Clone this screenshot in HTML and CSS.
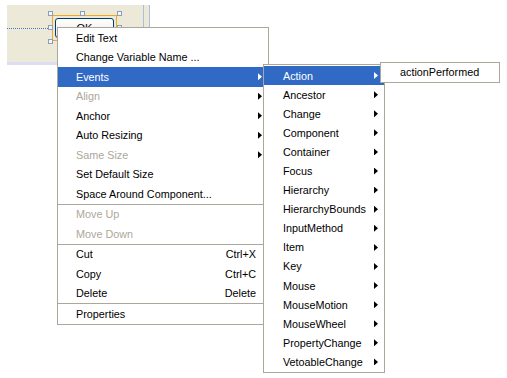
FILE: index.html
```html
<!DOCTYPE html>
<html lang="en">
<head>
  <meta charset="UTF-8">
  <title>Form Designer - Context Menu</title>
  <link rel="stylesheet" href="styles.css">
</head>
<body>
  <!-- design surface with the selected OK button -->
  <div class="canvas">
    <div class="surface">
      <div class="guide"></div>
      <div class="selection"></div>
      <div class="btn">OK</div>
      <span class="handle h-tl"></span>
      <span class="handle h-tm"></span>
      <span class="handle h-tr"></span>
      <span class="handle h-ml"></span>
      <span class="handle h-mr"></span>
      <span class="handle h-bl"></span>
      <span class="handle h-bm"></span>
      <span class="handle h-br"></span>
    </div>
    <div class="surface-foot"></div>
  </div>

  <!-- context menu -->
  <ul class="menu main-menu">
    <li class="item"><span class="label">Edit Text</span></li>
    <li class="item"><span class="label">Change Variable Name ...</span></li>
    <li class="item active"><span class="label">Events</span><span class="arrow"></span></li>
    <li class="item disabled"><span class="label">Align</span><span class="arrow"></span></li>
    <li class="item"><span class="label">Anchor</span><span class="arrow"></span></li>
    <li class="item"><span class="label">Auto Resizing</span><span class="arrow"></span></li>
    <li class="item disabled"><span class="label">Same Size</span><span class="arrow"></span></li>
    <li class="item"><span class="label">Set Default Size</span></li>
    <li class="item"><span class="label">Space Around Component...</span></li>
    <li class="sep"></li>
    <li class="item disabled"><span class="label">Move Up</span></li>
    <li class="item disabled"><span class="label">Move Down</span></li>
    <li class="sep"></li>
    <li class="item"><span class="label">Cut</span><span class="key">Ctrl+X</span></li>
    <li class="item"><span class="label">Copy</span><span class="key">Ctrl+C</span></li>
    <li class="item"><span class="label">Delete</span><span class="key">Delete</span></li>
    <li class="sep"></li>
    <li class="item"><span class="label">Properties</span></li>
  </ul>

  <!-- Events submenu -->
  <ul class="menu events-menu">
    <li class="item active"><span class="label">Action</span><span class="arrow"></span></li>
    <li class="item"><span class="label">Ancestor</span><span class="arrow"></span></li>
    <li class="item"><span class="label">Change</span><span class="arrow"></span></li>
    <li class="item"><span class="label">Component</span><span class="arrow"></span></li>
    <li class="item"><span class="label">Container</span><span class="arrow"></span></li>
    <li class="item"><span class="label">Focus</span><span class="arrow"></span></li>
    <li class="item"><span class="label">Hierarchy</span><span class="arrow"></span></li>
    <li class="item"><span class="label">HierarchyBounds</span><span class="arrow"></span></li>
    <li class="item"><span class="label">InputMethod</span><span class="arrow"></span></li>
    <li class="item"><span class="label">Item</span><span class="arrow"></span></li>
    <li class="item"><span class="label">Key</span><span class="arrow"></span></li>
    <li class="item"><span class="label">Mouse</span><span class="arrow"></span></li>
    <li class="item"><span class="label">MouseMotion</span><span class="arrow"></span></li>
    <li class="item"><span class="label">MouseWheel</span><span class="arrow"></span></li>
    <li class="item"><span class="label">PropertyChange</span><span class="arrow"></span></li>
    <li class="item"><span class="label">VetoableChange</span><span class="arrow"></span></li>
  </ul>

  <!-- Action submenu -->
  <ul class="menu action-menu">
    <li class="item"><span class="label">actionPerformed</span></li>
  </ul>
</body>
</html>
```

FILE: styles.css
```css
body {
  margin: 0;
  width: 507px;
  height: 378px;
  background: #fff;
  font-family: 'Liberation Sans', Arial, sans-serif;
  font-size: 10.8px;
  color: #000;
  position: relative;
  overflow: hidden;
}

/* design surface */
.canvas {
  padding: 5px 0 0 7px;
}
.surface {
  position: relative;
  width: 143px;
  height: 57px;
  background: linear-gradient(to right, #ece9d8 136px, #a9bfe2 136px 137px, #ece9d8 137px 142px, #a9bfe2 142px);
}
.surface-foot {
  width: 136px;
  height: 3px;
  background: #dcdcf4;
}
.guide {
  position: absolute;
  left: 0; top: 23px;
  width: 41px;
  border-top: 1px dotted #4a78c8;
}
.selection {
  position: absolute;
  left: 45px; top: 10px;
  width: 65px; height: 26px;
  box-sizing: border-box;
  border: 1px solid #f5a623;
}
.btn {
  position: absolute;
  left: 48px; top: 13px;
  width: 59px; height: 20px;
  box-sizing: border-box;
  border: 1px solid #003c74;
  border-radius: 3px;
  background: linear-gradient(#fff, #ecebe6);
  text-align: center;
  line-height: 18px;
  font-size: 11px;
}
.handle {
  position: absolute;
  width: 5px; height: 5px;
  box-sizing: border-box;
  border: 1px solid #8d9fb8;
  background: #f4f7fc;
}
.h-tl { left: 41px; top: 6px; }
.h-tm { left: 73px; top: 6px; }
.h-tr { left: 110px; top: 6px; }
.h-ml { left: 41px; top: 20px; }
.h-mr { left: 110px; top: 20px; }
.h-bl { left: 41px; top: 34px; }
.h-bm { left: 73px; top: 34px; }
.h-br { left: 110px; top: 34px; }

/* menus */
.menu {
  position: absolute;
  margin: 0;
  padding: 0;
  list-style: none;
  background: #fff;
  border: 1px solid #aca899;
  box-sizing: border-box;
}
.main-menu {
  left: 57px;
  top: 27px;
  width: 212px;
}
.events-menu {
  left: 263px;
  top: 64px;
  width: 122px;
  padding-top: 1px;
}
.action-menu {
  left: 380px;
  top: 62px;
  width: 120px;
}
.item {
  display: grid;
  grid-template-columns: 1fr auto 4px;
  column-gap: 2px;
  align-items: center;
  height: 19.5px;
  padding: 0 6px 0 18px;
  white-space: nowrap;
}
.events-menu .item {
  height: 19.1px;
  padding-left: 19px;
}
.action-menu .item {
  height: 19px;
  padding: 0 19px;
  display: block;
  line-height: 19px;
}
.label { grid-column: 1; }
.key { grid-column: 2; text-align: right; }
.arrow {
  grid-column: 3;
  width: 4px;
  height: 7px;
  background: currentColor;
  clip-path: polygon(0 0, 100% 50%, 0 100%);
}
.item.active {
  background: #316ac5;
  color: #fff;
}
.item.disabled {
  color: #aca899;
}
.item.disabled .arrow {
  background: #000;
}
.sep {
  height: 1px;
  background: #aca899;
}
```
